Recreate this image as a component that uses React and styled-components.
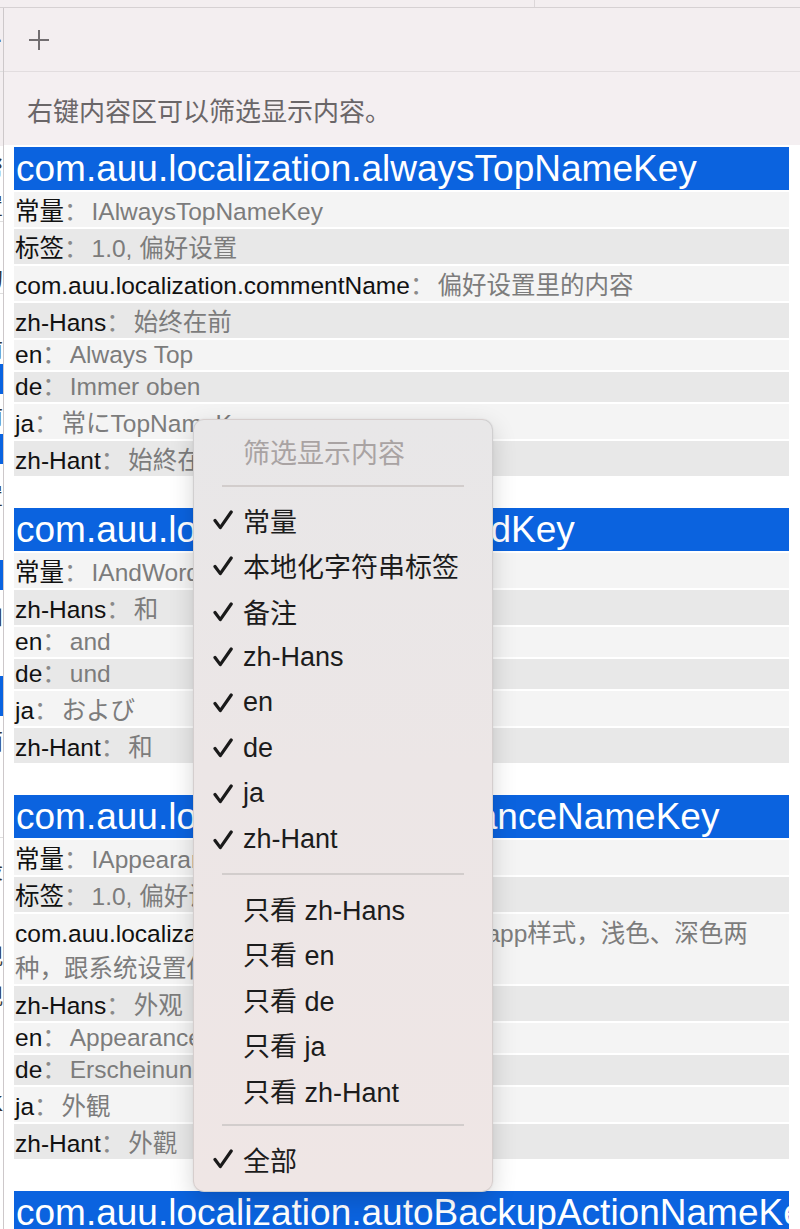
import React from 'react';
import styled, { createGlobalStyle } from 'styled-components';

const Global = createGlobalStyle`
  html, body { margin: 0; padding: 0; background: #ffffff; }
  body { font-family: "Liberation Sans", "Noto Sans CJK SC", sans-serif; }
  * { box-sizing: border-box; }
`;

const Window = styled.div`
  position: relative;
  width: 800px;
  height: 1229px;
  overflow: hidden;
  display: flex;
  flex-direction: column;
  background: #ffffff;
`;

const TopStrip = styled.div`
  height: 8px;
  flex: none;
  display: flex;
  background: #f3eef0;
  border-bottom: 1px solid #d6d1d3;
`;

const TopTab = styled.div`
  width: 535px;
  border-right: 1px solid #dcd7d9;
`;

const Body = styled.div`
  flex: 1;
  display: flex;
  min-height: 0;
`;

const Sliver = styled.div`
  width: 4px;
  flex: none;
  border-right: 1px solid #cdc8ca;
  overflow: hidden;
  display: flex;
  flex-direction: column;
  background: #ffffff;
`;

const SliverItem = styled.div`
  height: ${p => p.$h}px;
  flex: none;
  display: flex;
  justify-content: flex-end;
  align-items: center;
  white-space: nowrap;
  overflow: hidden;
  font-size: 22px;
  color: #333;
  background: ${p => (p.$blue ? '#0a63e0' : p.$pink ? '#f3eef0' : 'transparent')};
  border-bottom: ${p => (p.$line ? '1px solid #dedede' : 'none')};
`;

const Main = styled.div`
  flex: 1;
  display: flex;
  flex-direction: column;
  min-width: 0;
`;

const Toolbar = styled.div`
  height: 64px;
  flex: none;
  display: flex;
  align-items: center;
  padding-left: 24px;
  background: #f3eef0;
  border-bottom: 1px solid #e2dddf;
`;

const AddButton = styled.button`
  width: 22px;
  height: 22px;
  padding: 0;
  border: none;
  background: transparent;
  display: flex;
  align-items: center;
  justify-content: center;
  color: #726e71;
`;

const Hint = styled.div`
  height: 73px;
  flex: none;
  display: flex;
  align-items: center;
  padding: 2px 0 0 23px;
  background: #f4eff1;
  font-family: "Noto Sans CJK SC", sans-serif;
  font-size: 26px;
  color: #6a6668;
`;

const Content = styled.div`
  flex: 1;
  padding: 2px 11px 0 10px;
  background: #ffffff;
  display: flex;
  flex-direction: column;
  gap: 32px;
`;

const Section = styled.section`
  display: flex;
  flex-direction: column;
  gap: 2px;
`;

const Header = styled.div`
  height: 43px;
  line-height: 43px;
  padding: 0 2px;
  background: #0b63df;
  color: #ffffff;
  font-size: 37px;
  white-space: nowrap;
  overflow: hidden;
`;

const Row = styled.div`
  min-height: 30px;
  display: flex;
  align-items: center;
  flex-wrap: wrap;
  font-size: 24.5px;
  padding: 0 1px;
  background: ${p => (p.$shade ? '#e8e8e8' : '#f4f4f4')};
  color: #111111;
`;

const RowText = styled.div`
  width: 100%;
`;

const Key = styled.span`
  color: #111111;
`;

const Colon = styled.span`
  color: #8a8a8a;
  font-family: "Noto Sans CJK SC", sans-serif;
  line-height: 1;
  margin-right: 3px;
`;

const Value = styled.span`
  color: #7c7c7c;
`;

const Menu = styled.div`
  position: absolute;
  left: 193px;
  top: 419px;
  width: 300px;
  padding: 9px 0 9px;
  border-radius: 11px;
  border: 1px solid rgba(0, 0, 0, 0.1);
  background: linear-gradient(180deg, #e8e7e8 0%, #ece6e6 45%, #efe6e5 100%);
  box-shadow: 0 8px 24px rgba(0, 0, 0, 0.16), 0 0 2px rgba(0, 0, 0, 0.08);
  font-size: 27px;
  color: #1c1c1c;
`;

const MenuItem = styled.div`
  height: 45.6px;
  display: flex;
  align-items: center;
  padding-left: 19px;
  color: ${p => (p.$disabled ? '#a9a3a3' : '#1c1c1c')};
  white-space: nowrap;
`;

const CheckSlot = styled.span`
  width: 30px;
  flex: none;
  display: flex;
  align-items: center;
`;

const Separator = styled.div`
  height: 23px;
  display: flex;
  align-items: center;
  padding: 0 28px 0 28px;
  &::before {
    content: '';
    flex: 1;
    height: 2px;
    background: #d2cdcc;
  }
`;

const Check = () => (
  <svg width="20" height="20" viewBox="0 0 20 20" fill="none">
    <path d="M2 10.5 L7.3 17.6 L18.2 2" stroke="#1a1a1a" strokeWidth="3.2" strokeLinecap="round" strokeLinejoin="round" />
  </svg>
);

const Plus = () => (
  <svg width="22" height="22" viewBox="0 0 22 22" fill="none">
    <path d="M11 1 V21 M1 11 H21" stroke="currentColor" strokeWidth="2" />
  </svg>
);

const sections = [
  {
    key: 'com.auu.localization.alwaysTopNameKey',
    rows: [
      ['常量', 'IAlwaysTopNameKey'],
      ['标签', '1.0, 偏好设置'],
      ['com.auu.localization.commentName', '偏好设置里的内容'],
      ['zh-Hans', '始终在前'],
      ['en', 'Always Top'],
      ['de', 'Immer oben'],
      ['ja', '常にTopNameKey'],
      ['zh-Hant', '始終在前'],
    ],
  },
  {
    key: 'com.auu.localization.andWordKey',
    rows: [
      ['常量', 'IAndWordKey'],
      ['zh-Hans', '和'],
      ['en', 'and'],
      ['de', 'und'],
      ['ja', 'および'],
      ['zh-Hant', '和'],
    ],
  },
  {
    key: 'com.auu.localization.appearanceNameKey',
    rows: [
      ['常量', 'IAppearanceNameKey'],
      ['标签', '1.0, 偏好设置'],
      ['com.auu.localization.commentName', '设置app样式，浅色、深色两种，跟系统设置保持一致'],
      ['zh-Hans', '外观'],
      ['en', 'Appearance'],
      ['de', 'Erscheinungsbild'],
      ['ja', '外観'],
      ['zh-Hant', '外觀'],
    ],
  },
  {
    key: 'com.auu.localization.autoBackupActionNameKey',
    rows: [
      ['常量', 'IAutoBackupActionNameKey'],
      ['标签', '1.0, 偏好设置'],
    ],
  },
];

const sliverItems = [
  { h: 64, pink: true, line: true, t: '·' },
  { h: 74, pink: true, t: '' },
  { h: 40, t: '帮' },
  { h: 36, t: '置', line: true },
  { h: 36, t: '、' },
  { h: 36, t: '的', line: true },
  { h: 36, t: '、' },
  { h: 34, t: '前' },
  { h: 30, blue: true, t: '' },
  { h: 40, t: '前' },
  { h: 30, blue: true, t: '' },
  { h: 60, t: '置' },
  { h: 36, t: '、' },
  { h: 30, blue: true, t: '' },
  { h: 50, t: '和' },
  { h: 36, t: '' },
  { h: 40, blue: true, t: '' },
  { h: 46, t: '面' },
  { h: 40, t: '、' },
  { h: 36, t: '、', line: true },
  { h: 60, t: '设' },
  { h: 36, t: '、' },
  { h: 40, t: '观' },
  { h: 40, t: '观' },
  { h: 60, t: '' },
  { h: 60, t: 'K' },
];

const menuChecked = ['常量', '本地化字符串标签', '备注', 'zh-Hans', 'en', 'de', 'ja', 'zh-Hant'];
const menuOnly = ['zh-Hans', 'en', 'de', 'ja', 'zh-Hant'];

export default function App() {
  return (
    <>
      <Global />
      <Window>
        <TopStrip>
          <TopTab />
        </TopStrip>
        <Body>
          <Sliver>
            {sliverItems.map((s, i) => (
              <SliverItem key={i} $h={s.h} $blue={s.blue} $pink={s.pink} $line={s.line}>
                {s.t}
              </SliverItem>
            ))}
          </Sliver>
          <Main>
            <Toolbar>
              <AddButton aria-label="add">
                <Plus />
              </AddButton>
            </Toolbar>
            <Hint>右键内容区可以筛选显示内容。</Hint>
            <Content>
              {sections.map(sec => (
                <Section key={sec.key}>
                  <Header>{sec.key}</Header>
                  {sec.rows.map(([k, v], i) => (
                    <Row key={k + i} $shade={i % 2 === 1}>
                      <RowText>
                        <Key>{k}</Key>
                        <Colon>：</Colon>
                        <Value>{v}</Value>
                      </RowText>
                    </Row>
                  ))}
                </Section>
              ))}
            </Content>
          </Main>
        </Body>
        <Menu>
          <MenuItem $disabled>
            <CheckSlot />
            筛选显示内容
          </MenuItem>
          <Separator />
          {menuChecked.map(label => (
            <MenuItem key={label}>
              <CheckSlot>
                <Check />
              </CheckSlot>
              {label}
            </MenuItem>
          ))}
          <Separator />
          {menuOnly.map(label => (
            <MenuItem key={label}>
              <CheckSlot />
              只看 {label}
            </MenuItem>
          ))}
          <Separator />
          <MenuItem>
            <CheckSlot>
              <Check />
            </CheckSlot>
            全部
          </MenuItem>
        </Menu>
      </Window>
    </>
  );
}
